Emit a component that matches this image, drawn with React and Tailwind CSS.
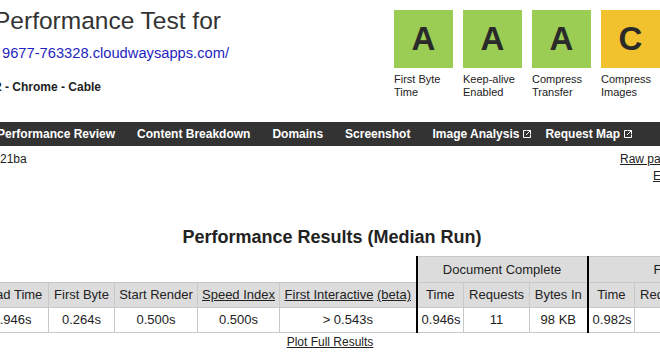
import React from "react";

const grades = [
  { letter: "A", label: ["First Byte", "Time"], color: "bg-[#9bcd55]" },
  { letter: "A", label: ["Keep-alive", "Enabled"], color: "bg-[#9bcd55]" },
  { letter: "A", label: ["Compress", "Transfer"], color: "bg-[#9bcd55]" },
  { letter: "C", label: ["Compress", "Images"], color: "bg-[#f2c12e]" },
];

const ExternalIcon = () => (
  <svg width="10" height="10" viewBox="0 0 10 10" className="ml-[3px] inline-block" fill="none" stroke="white" strokeWidth="1">
    <path d="M4.5 1.5H1.5V8.5H8.5V5.5" />
    <path d="M5 1.5H8.5V5" />
    <path d="M8.5 1.5L4 6" />
  </svg>
);

const navItems = [
  { label: "Performance Review" },
  { label: "Content Breakdown" },
  { label: "Domains" },
  { label: "Screenshot" },
  { label: "Image Analysis", external: true },
  { label: "Request Map", external: true },
];

const GradeBox = ({ grade }) => (
  <div className="w-[59px] shrink-0">
    <div className={`h-[58px] ${grade.color} flex items-center justify-center text-[33px] font-bold text-[#2a2a2a]`}>
      {grade.letter}
    </div>
    <div className="mt-[5px] text-[11px] leading-[13px] text-[#222] whitespace-nowrap">
      {grade.label[0]}
      <br />
      {grade.label[1]}
    </div>
  </div>
);

export default function App() {
  const th = "border border-[#c8c8c8] bg-[#dcdcdc] font-normal px-1 whitespace-nowrap";
  const td = "border border-[#c8c8c8] px-1 whitespace-nowrap";
  const thick = "border-l-2 border-l-black";

  return (
    <div className="w-[660px] h-[354px] overflow-hidden bg-white text-[#222] font-['Liberation_Sans',Arial,sans-serif]">
      {/* Header */}
      <div className="flex h-[122px]">
        <div className="w-[394px] shrink-0">
          <div className="-ml-[6px] mt-[6px] text-[24.5px] leading-[30px] text-[#333] whitespace-nowrap">
            Performance Test for
          </div>
          <div className="mt-[8px] ml-[2px] text-[14.7px] leading-[18px] text-[#1f1fc0] whitespace-nowrap">
            9677-763328.cloudwaysapps.com/
          </div>
          <div className="mt-[18px] -ml-[5px] text-[12px] leading-[14px] font-bold whitespace-nowrap">
            2 - Chrome - Cable
          </div>
        </div>
        <div className="flex gap-[10px] pt-[10px]">
          {grades.map((g, i) => (
            <GradeBox key={i} grade={g} />
          ))}
        </div>
      </div>

      {/* Navigation */}
      <div className="h-[24px] bg-[#333] flex items-center -ml-[14px] whitespace-nowrap">
        {navItems.map((item) => (
          <div
            key={item.label}
            className={`pl-[11px] ${item.external ? "pr-[2px]" : "pr-[11px]"} text-[12px] font-bold text-white flex items-center shrink-0`}
          >
            {item.label}
            {item.external && <ExternalIcon />}
          </div>
        ))}
      </div>

      {/* Test info row */}
      <div className="flex text-[12px] leading-[17px] mt-[5px] h-[75px]">
        <div className="w-[620px] shrink-0">21ba</div>
        <div className="whitespace-nowrap">
          <div className="underline">Raw page data</div>
          <div className="underline ml-[33px]">Export HTTP Archive (.har)</div>
        </div>
      </div>

      {/* Results */}
      <div className="pl-[4px] text-center text-[18px] leading-[22px] font-bold text-[#222] h-[30px]">
        Performance Results (Median Run)
      </div>

      <table className="table-fixed border-collapse w-[818px] -ml-[25px] text-[13px] text-center">
        <colgroup>
          <col className="w-[73px]" />
          <col className="w-[66px]" />
          <col className="w-[83px]" />
          <col className="w-[82px]" />
          <col className="w-[137px]" />
          <col className="w-[47px]" />
          <col className="w-[66px]" />
          <col className="w-[58px]" />
          <col className="w-[47px]" />
          <col className="w-[66px]" />
          <col className="w-[58px]" />
          <col className="w-[35px]" />
        </colgroup>
        <thead>
          <tr className="h-[26px]">
            <th colSpan={5} className="border-0 bg-white"></th>
            <th colSpan={3} className={`${th} ${thick}`}>Document Complete</th>
            <th colSpan={4} className={`${th} ${thick}`}>Fully Loaded</th>
          </tr>
          <tr className="h-[25px]">
            <th className={th}>Load Time</th>
            <th className={th}>First Byte</th>
            <th className={th}>Start Render</th>
            <th className={th}><span className="underline">Speed Index</span></th>
            <th className={th}>
              <span className="underline">First Interactive</span> <span className="underline">(beta)</span>
            </th>
            <th className={`${th} ${thick}`}>Time</th>
            <th className={th}>Requests</th>
            <th className={th}>Bytes In</th>
            <th className={`${th} ${thick}`}>Time</th>
            <th className={th}>Requests</th>
            <th className={th}>Bytes In</th>
            <th className={th}>Cost</th>
          </tr>
        </thead>
        <tbody>
          <tr className="h-[25px]">
            <td className={td}>0.946s</td>
            <td className={td}>0.264s</td>
            <td className={td}>0.500s</td>
            <td className={td}>0.500s</td>
            <td className={td}>&gt; 0.543s</td>
            <td className={`${td} ${thick}`}>0.946s</td>
            <td className={td}>11</td>
            <td className={td}>98 KB</td>
            <td className={`${td} ${thick}`}>0.982s</td>
            <td className={td}>11</td>
            <td className={td}>98 KB</td>
            <td className={td}>$</td>
          </tr>
        </tbody>
      </table>

      <div className="mt-[2px] text-center text-[12px] leading-[14px]">
        <span className="underline">Plot Full Results</span>
      </div>
    </div>
  );
}
